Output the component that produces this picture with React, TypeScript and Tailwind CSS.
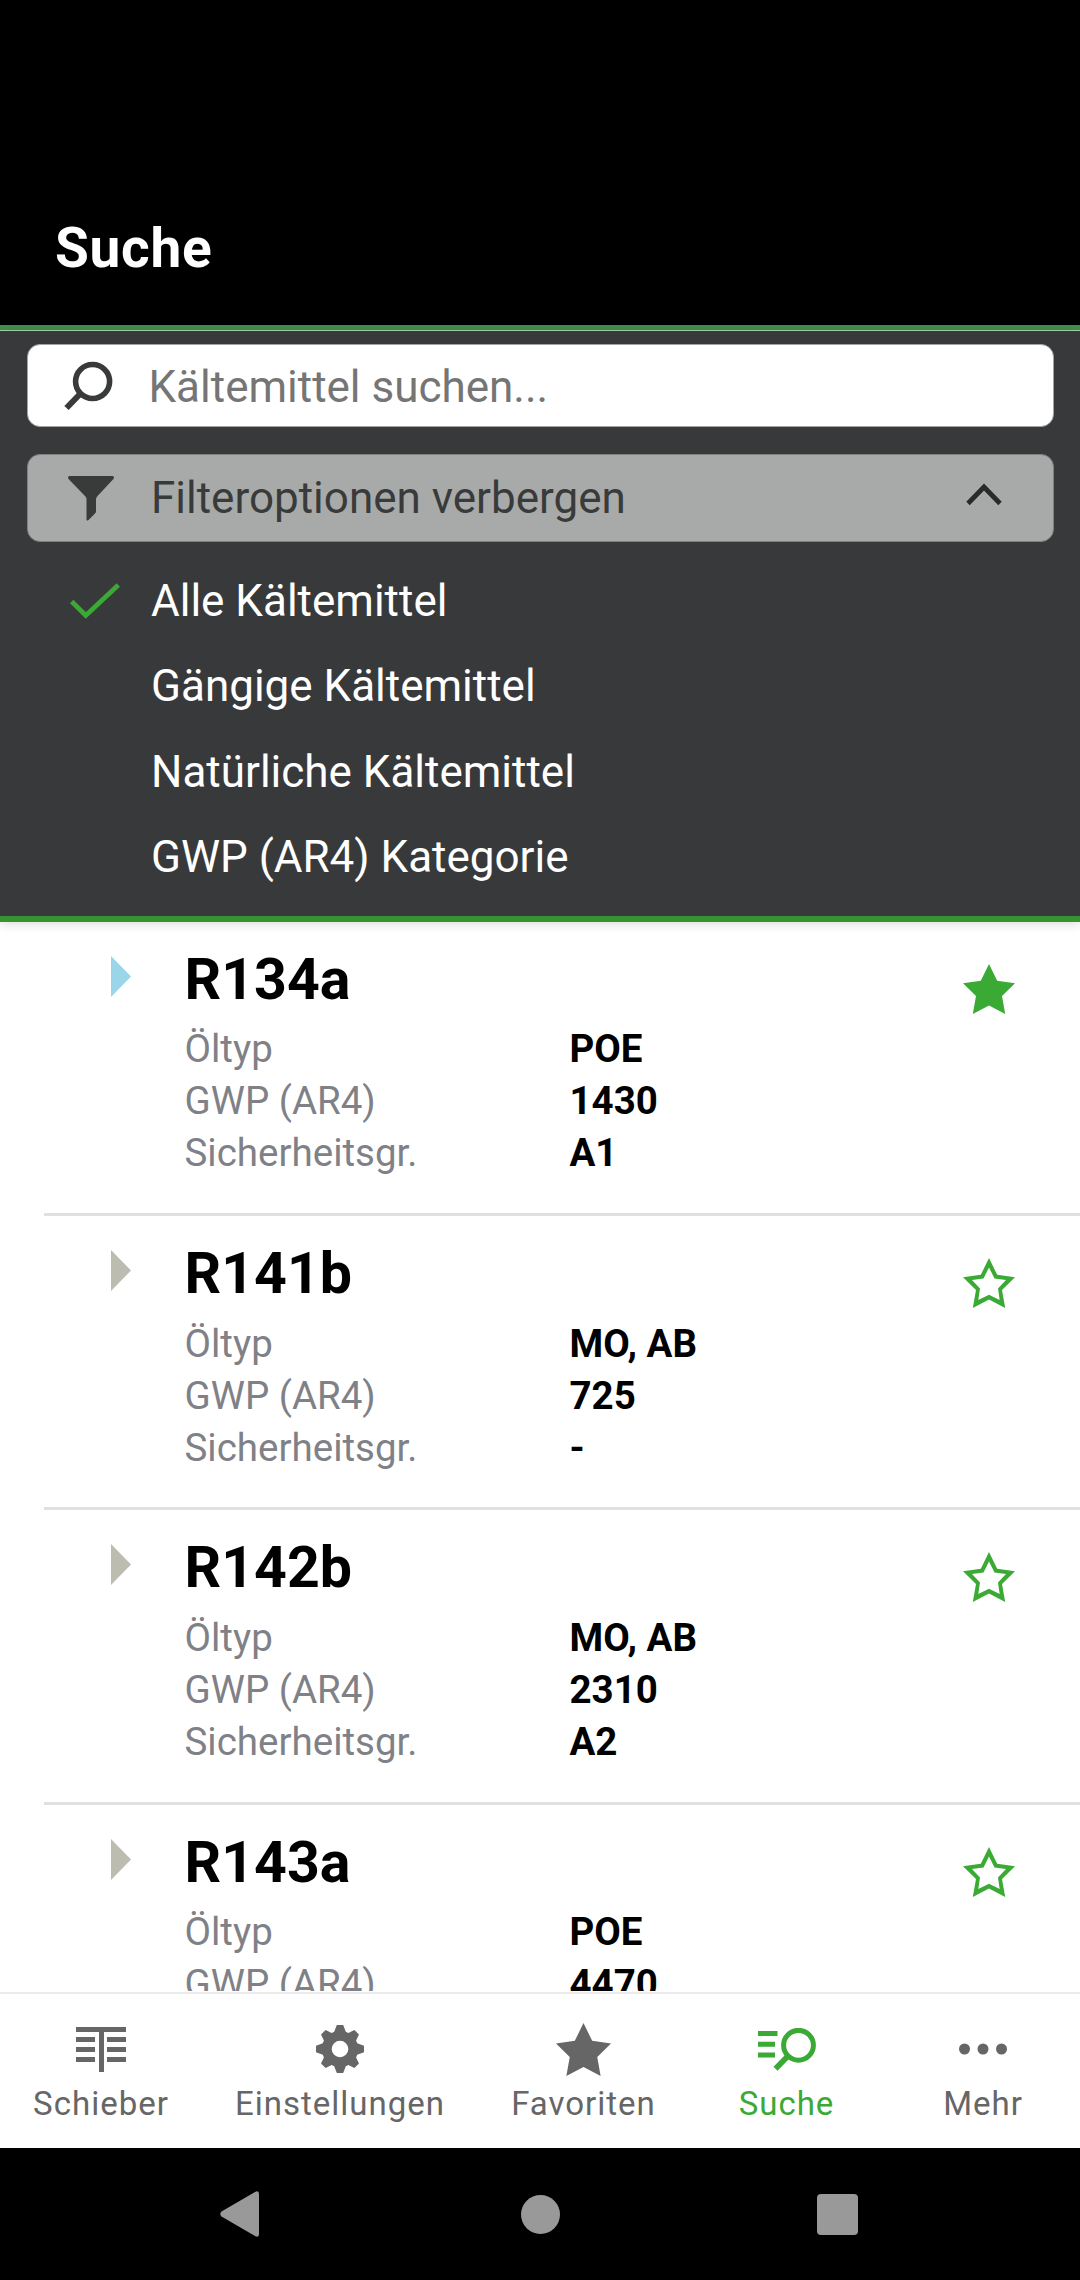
import React, { useState } from 'react';

interface Refrigerant {
  name: string;
  oil: string;
  gwp: string;
  safety?: string;
  arrow: string;
}

const REFRIGERANTS: Refrigerant[] = [
  { name: 'R134a', oil: 'POE', gwp: '1430', safety: 'A1', arrow: 'text-[#9bd5e9]' },
  { name: 'R141b', oil: 'MO, AB', gwp: '725', safety: '-', arrow: 'text-[#bcbcb0]' },
  { name: 'R142b', oil: 'MO, AB', gwp: '2310', safety: 'A2', arrow: 'text-[#bcbcb0]' },
  { name: 'R143a', oil: 'POE', gwp: '4470', arrow: 'text-[#bcbcb0]' },
];

const FILTERS = ['Alle Kältemittel', 'Gängige Kältemittel', 'Natürliche Kältemittel', 'GWP (AR4) Kategorie'];

const STAR = 'M26 0 L34.2 16.8 L52 19.3 L39 32 L42.2 50 L26 41.5 L9.8 50 L13 32 L0 19.3 L17.8 16.8 Z';

function StarIcon({ filled, className }: { filled: boolean; className: string }) {
  return (
    <svg viewBox="0 0 52 50" className={className} fill="currentColor">
      <path
        fillRule="evenodd"
        d={filled ? STAR : `${STAR} M26 9.5 L20.5 20.5 L9 22 L17 30.5 L15.3 42 L26 36.8 L36.7 42 L35 30.5 L43 22 L31.5 20.5 Z`}
      />
    </svg>
  );
}

function SliderIcon() {
  return (
    <svg viewBox="0 0 50 45" className="w-[50px] h-[45px]" fill="currentColor">
      <path d="M0 0h50v5H28v40h-5V5H0zM0 10h19v5H0zM0 20h19v5H0zM0 30h19v5H0zM31 10h19v5H31zM31 20h19v5H31zM31 30h19v5H31z" />
    </svg>
  );
}

function GearIcon() {
  return (
    <svg viewBox="-24 -24 48 48" className="w-12 h-12" fill="currentColor">
      <path
        fillRule="evenodd"
        d="M-3.2 -24H3.2L5.8 -17.2L8.4 -16.1L14.4 -19L19 -14.4L16.1 -8.4L17.2 -5.8L24 -3.2V3.2L17.2 5.8L16.1 8.4L19 14.4L14.4 19L8.4 16.1L5.8 17.2L3.2 24H-3.2L-5.8 17.2L-8.4 16.1L-14.4 19L-19 14.4L-16.1 8.4L-17.2 5.8L-24 3.2V-3.2L-17.2 -5.8L-16.1 -8.4L-19 -14.4L-14.4 -19L-8.4 -16.1L-5.8 -17.2ZM0 -8.3A8.3 8.3 0 1 0 0 8.3A8.3 8.3 0 1 0 0 -8.3Z"
      />
    </svg>
  );
}

function ListSearchIcon() {
  return (
    <svg viewBox="0 0 58 43" className="w-[58px] h-[43px]" fill="none" stroke="currentColor" strokeWidth="5">
      <path d="M0 5.5h19.5M0 16.3h17M0 27h17" />
      <circle cx="40.5" cy="17.3" r="14.9" />
      <path d="M30 28 L17.5 40.7" strokeWidth="5.6" />
    </svg>
  );
}

function DotsIcon() {
  return (
    <svg viewBox="0 0 48 12" className="w-12 h-3" fill="currentColor">
      <circle cx="5.5" cy="6" r="5.5" />
      <circle cx="24" cy="6" r="5.5" />
      <circle cx="42.5" cy="6" r="5.5" />
    </svg>
  );
}

const TABS = [
  { label: 'Schieber', icon: <SliderIcon />, width: 'w-[202px]' },
  { label: 'Einstellungen', icon: <GearIcon />, width: 'w-[276px]' },
  { label: 'Favoriten', icon: <StarIcon filled className="w-[55px] h-[53px]" />, width: 'w-[211px]' },
  { label: 'Suche', icon: <ListSearchIcon />, width: 'w-[195px]' },
  { label: 'Mehr', icon: <DotsIcon />, width: 'w-[198px]' },
];

export default function App() {
  const [filter, setFilter] = useState(FILTERS[0]);
  const [favorites, setFavorites] = useState<string[]>(['R134a']);
  const [tab, setTab] = useState('Suche');

  const toggleFavorite = (name: string) => {
    setFavorites((prev) => (prev.includes(name) ? prev.filter((n) => n !== name) : [...prev, name]));
  };

  return (
    <div className="w-[1080px] h-[2280px] flex flex-col overflow-hidden bg-white font-[Roboto,sans-serif] select-none">

      {/* HEADER */}
      <header className="h-[331px] shrink-0 bg-black border-b border-[#a5d3aa]">
        <div className="h-[330px] border-b-[5px] border-[#418f4b] pl-[55px] pt-[215px]">
          <h1 className="text-[55px] leading-[66px] font-bold tracking-[0.7px] text-white">Suche</h1>
        </div>
      </header>

      {/* SEARCH + FILTER */}
      <section className="relative z-10 h-[591px] shrink-0 bg-[#38393b] pl-[27px] pr-[26.5px] pt-[13px] border-b-[6px] border-[#34942f] shadow-[0_2px_10px_rgba(0,0,0,0.15)]">
        <div className="h-[83px] flex items-center rounded-[13px] bg-white border border-[#a3a3a3]">
          <svg viewBox="0 0 50 50" className="w-[50px] h-[50px] ml-[36px] shrink-0" fill="none" stroke="#393b3a">
            <circle cx="28.6" cy="20.5" r="17" strokeWidth="5.6" />
            <path d="M16.5 32.5 L2.5 47" strokeWidth="6" />
          </svg>
          <input
            type="text"
            placeholder="Kältemittel suchen..."
            className="ml-[34.5px] mt-[2px] w-[800px] text-[44px] leading-[60px] placeholder:text-[#757575] outline-none"
          />
        </div>

        <button className="mt-[27px] w-full h-[88px] flex items-center rounded-[13px] bg-[#a8aaa9] border border-[#7f8180] text-[#393b3a]">
          <svg viewBox="0 0 46 45" className="w-[46px] h-[45px] ml-[40px] shrink-0" fill="currentColor">
            <path d="M1.5 0H44.5Q46 0 46 1.5Q46 2.5 45 3.5L29.5 20Q28 21.8 28 23V35Q28 36.5 27 37.5L20.5 44Q18.5 45.5 18.5 43V23Q18.5 21.5 17 20L1 3.5Q0 2.5 0 1.5Q0 0 1.5 0Z" />
          </svg>
          <span className="ml-[37px] text-[44px] leading-[60px]">Filteroptionen verbergen</span>
          <svg viewBox="0 0 36 23" className="w-9 h-[23px] ml-auto mr-[51px] mb-[8px]" fill="none" stroke="#282a2b" strokeWidth="4.8">
            <path d="M2 20.5 L18 4 L34 20.5" />
          </svg>
        </button>

        <ul className="mt-[16.5px]">
          {FILTERS.map((name) => (
            <li key={name} onClick={() => setFilter(name)} className="h-[85.3px] flex items-center pl-[43px]">
              <div className="w-[81px]">
                {filter === name && (
                  <svg viewBox="0 0 50 36" className="w-[50px] h-9" fill="none" stroke="#3aaa35" strokeWidth="4.8">
                    <path d="M1.7 18.5 L15.8 32.5 L48.3 2" />
                  </svg>
                )}
              </div>
              <span className="text-[44px] leading-[60px] text-white">{name}</span>
            </li>
          ))}
        </ul>
      </section>

      {/* RESULT LIST */}
      <main className="h-[1069px] shrink-0 overflow-hidden">
        {REFRIGERANTS.map((r) => (
          <article key={r.name} className="ml-[44px] h-[294.2px] flex items-start border-b-[3px] border-[#e0e0e0]">
            <svg viewBox="0 0 20 41" className={`w-5 h-[41px] ml-[67px] mt-[34px] shrink-0 ${r.arrow}`} fill="currentColor">
              <path d="M0 0 L20 20.5 L0 41Z" />
            </svg>
            <div className="ml-[53.5px] w-[740px] pt-[23px]">
              <h2 className="text-[57.3px] leading-[70px] font-bold text-black">{r.name}</h2>
              <dl className="mt-[8.4px] grid grid-cols-[385px_1fr] text-[38.5px] leading-[52px]">
                <dt className="text-[#808187]">Öltyp</dt>
                <dd className="font-bold text-black">{r.oil}</dd>
                <dt className="text-[#808187]">GWP (AR4)</dt>
                <dd className="font-bold text-black">{r.gwp}</dd>
                {r.safety && (
                  <>
                    <dt className="text-[#808187]">Sicherheitsgr.</dt>
                    <dd className="font-bold text-black">{r.safety}</dd>
                  </>
                )}
              </dl>
            </div>
            <button onClick={() => toggleFavorite(r.name)} className="ml-auto mr-[65.5px] mt-[42px] text-[#3aaa35]">
              <StarIcon filled={favorites.includes(r.name)} className="w-[52px] h-[50px]" />
            </button>
          </article>
        ))}
      </main>

      {/* TAB BAR */}
      <nav className="h-[157px] shrink-0 flex bg-white pt-[1px]">
        {TABS.map((t) => (
          <button
            key={t.label}
            onClick={() => setTab(t.label)}
            className={`${t.width} shrink-0 flex flex-col items-center border-t-2 border-[#ebebeb] pt-[25px] ${tab === t.label ? 'text-[#3aaa35]' : 'text-[#666666]'}`}
          >
            <span className="h-[60px] flex items-center">{t.icon}</span>
            <span className="mt-[5px] text-[33px] leading-[40px] tracking-[1px]">{t.label}</span>
          </button>
        ))}
      </nav>

      {/* SYSTEM NAVIGATION */}
      <footer className="h-[132px] shrink-0 bg-black flex items-center pl-[220px]">
        <svg viewBox="0 0 39 46" className="w-[39px] h-[46px]" fill="#999999">
          <path d="M35 1 Q39 -1 39 3 V43 Q39 47 35 45 L1.5 25.5 Q-1 23 1.5 20.5Z" />
        </svg>
        <div className="ml-[262px] w-[39px] h-[39px] rounded-full bg-[#999999]" />
        <div className="ml-[257px] w-[41px] h-[41px] rounded-[4px] bg-[#999999]" />
      </footer>
    </div>
  );
}
